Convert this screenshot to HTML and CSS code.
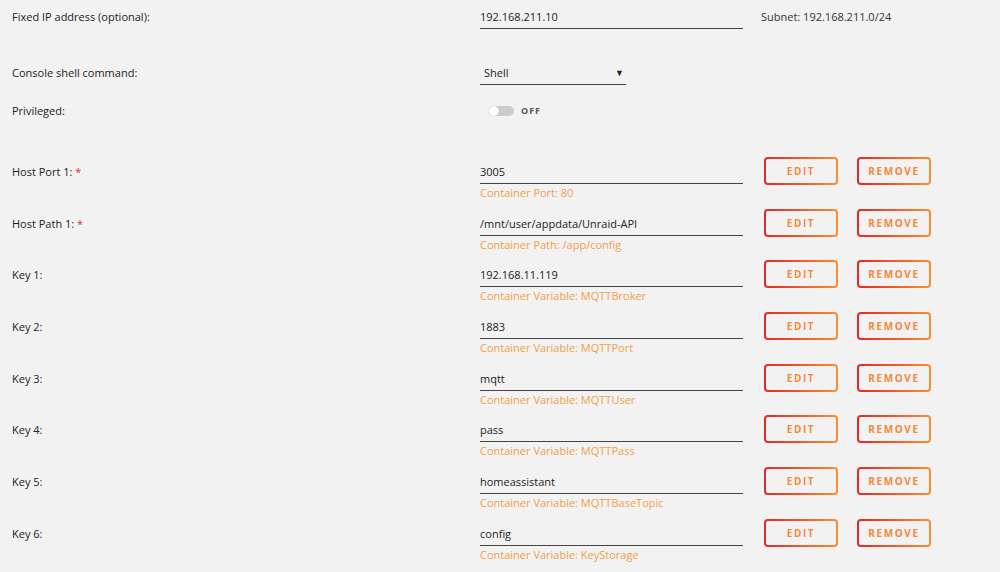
FILE: index.html
```html
<!DOCTYPE html>
<html lang="en">
<head>
  <meta charset="UTF-8">
  <title>Container settings</title>
  <link rel="stylesheet" href="styles.css">
</head>
<body>

  <div class="form">
    <div class="row row-ip">
      <div class="label">Fixed IP address (optional):</div>
      <div class="field"><input class="text" type="text" value="192.168.211.10"></div>
      <div class="note">Subnet: 192.168.211.0/24</div>
    </div>

    <div class="row row-shell">
      <div class="label">Console shell command:</div>
      <div class="select">
        <span>Shell</span>
        <span class="arrow">&#9660;</span>
      </div>
    </div>

    <div class="row row-priv">
      <div class="label">Privileged:</div>
      <div class="switch">
        <span class="track"><span class="knob"></span></span>
        <span class="switch-text">OFF</span>
      </div>
    </div>

    <div id="mappings"></div>
  </div>

  <script>
    const mappings = [
      { label: 'Host Port 1:', required: true, value: '3005', desc: 'Container Port: 80' },
      { label: 'Host Path 1:', required: true, value: '/mnt/user/appdata/Unraid-API', desc: 'Container Path: /app/config' },
      { label: 'Key 1:', value: '192.168.11.119', desc: 'Container Variable: MQTTBroker' },
      { label: 'Key 2:', value: '1883', desc: 'Container Variable: MQTTPort' },
      { label: 'Key 3:', value: 'mqtt', desc: 'Container Variable: MQTTUser' },
      { label: 'Key 4:', value: 'pass', desc: 'Container Variable: MQTTPass' },
      { label: 'Key 5:', value: 'homeassistant', desc: 'Container Variable: MQTTBaseTopic' },
      { label: 'Key 6:', value: 'config', desc: 'Container Variable: KeyStorage' }
    ];

    const box = document.getElementById('mappings');
    mappings.forEach(function (m) {
      const star = m.required ? ' <span class="req">*</span>' : '';
      box.insertAdjacentHTML('beforeend',
        '<div class="row row-map">' +
          '<div class="label">' + m.label + star + '</div>' +
          '<div class="field">' +
            '<input class="text" type="text" value="' + m.value + '">' +
            '<div class="desc">' + m.desc + '</div>' +
          '</div>' +
          '<div class="buttons">' +
            '<button class="btn"><span>EDIT</span></button>' +
            '<button class="btn"><span>REMOVE</span></button>' +
          '</div>' +
        '</div>');
    });
  </script>

</body>
</html>
```

FILE: styles.css
```css
body {
  margin: 0;
  background-color: #f2f2f2;
  font-family: "Open Sans", "Noto Sans", sans-serif;
  font-size: 11px;
  color: #1c1c1c;
}

.form {
  padding: 5px 12px 0 12px;
}

.row {
  display: grid;
  grid-template-columns: 468px 263px 1fr;
  align-items: start;
}

.label {
  line-height: 23px;
  color: #222;
}

.req {
  color: #e22828;
}

.text {
  display: block;
  box-sizing: border-box;
  width: 263px;
  height: 24px;
  margin: 0;
  padding: 0;
  border: none;
  border-bottom: 1px solid #444;
  background: transparent;
  font-family: inherit;
  font-size: 11px;
  color: #222;
  outline: none;
}

.note {
  line-height: 23px;
  padding-left: 18px;
  color: #333;
}

/* top rows */
.row-shell {
  margin-top: 32px;
}

.select {
  box-sizing: border-box;
  width: 146px;
  height: 24px;
  padding: 0 4px;
  border-bottom: 1px solid #444;
  display: flex;
  justify-content: space-between;
  align-items: center;
  padding-bottom: 1px;
}

.arrow {
  font-size: 9px;
  color: #222;
  margin-right: -2px;
}

.row-priv {
  margin-top: 14px;
}

.switch {
  display: flex;
  align-items: center;
  height: 23px;
  padding-left: 9px;
}

.track {
  position: relative;
  width: 25px;
  height: 10px;
  border-radius: 5px;
  background-color: #ccc;
}

.knob {
  position: absolute;
  left: 0;
  top: 0;
  width: 10px;
  height: 10px;
  border-radius: 50%;
  background-color: #fff;
  box-shadow: 0 0 1px rgba(0, 0, 0, 0.3);
}

.switch-text {
  margin-left: 7px;
  font-size: 9px;
  font-weight: bold;
  letter-spacing: 1px;
  color: #555;
}

/* port / path / variable rows */
#mappings {
  padding-top: 38px;
}

.row-map {
  height: 51.7px;
}

.desc {
  margin-top: 2px;
  line-height: 14px;
  color: #f0a048;
}

.buttons {
  display: flex;
  gap: 19px;
  padding-left: 21px;
  margin-top: -3px;
}

.btn {
  box-sizing: border-box;
  width: 74px;
  height: 28px;
  padding: 2px;
  border: none;
  border-radius: 4px;
  background: linear-gradient(90deg, #e22828, #ff8c2f);
  cursor: pointer;
}

.btn span {
  display: flex;
  align-items: center;
  justify-content: center;
  height: 100%;
  border-radius: 2px;
  background-color: #f2f2f2;
  font-family: "Open Sans", sans-serif;
  font-size: 10px;
  font-weight: bold;
  letter-spacing: 1.6px;
  color: #f5883a;
}
```
